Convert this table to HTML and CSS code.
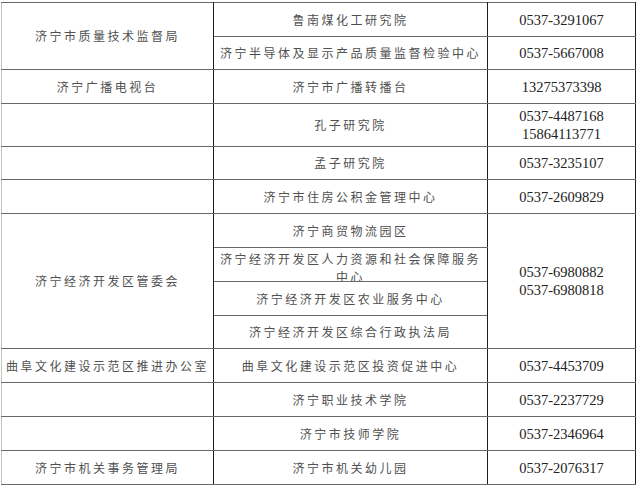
FILE: index.html
```html
<!DOCTYPE html>
<html lang="zh-CN">
<head>
<meta charset="utf-8">
<title>单位联系电话</title>
<link rel="stylesheet" href="styles.css">
</head>
<body>
<div class="sheet">
<table class="units">
<colgroup><col class="c1"><col class="c2"><col class="c3"></colgroup>
<tbody>
<tr class="h34"><td class="org" rowspan="2">济宁市质量技术监督局</td><td class="unit">鲁南煤化工研究院</td><td class="tel">0537-3291067</td></tr>
<tr class="h33"><td class="unit">济宁半导体及显示产品质量监督检验中心</td><td class="tel">0537-5667008</td></tr>
<tr class="h34"><td class="org">济宁广播电视台</td><td class="unit">济宁市广播转播台</td><td class="tel">13275373398</td></tr>
<tr class="h43"><td class="org"></td><td class="unit">孔子研究院</td><td class="tel">0537-4487168<br>15864113771</td></tr>
<tr class="h33"><td class="org"></td><td class="unit">孟子研究院</td><td class="tel">0537-3235107</td></tr>
<tr class="h34"><td class="org"></td><td class="unit">济宁市住房公积金管理中心</td><td class="tel">0537-2609829</td></tr>
<tr class="h34"><td class="org" rowspan="4">济宁经济开发区管委会</td><td class="unit">济宁商贸物流园区</td><td class="tel" rowspan="4">0537-6980882<br>0537-6980818</td></tr>
<tr class="h34"><td class="unit"><div class="clip">济宁经济开发区人力资源和社会保障服务中心</div></td></tr>
<tr class="h34"><td class="unit">济宁经济开发区农业服务中心</td></tr>
<tr class="h33"><td class="unit">济宁经济开发区综合行政执法局</td></tr>
<tr class="h34"><td class="org">曲阜文化建设示范区推进办公室</td><td class="unit">曲阜文化建设示范区投资促进中心</td><td class="tel">0537-4453709</td></tr>
<tr class="h34"><td class="org"></td><td class="unit">济宁职业技术学院</td><td class="tel">0537-2237729</td></tr>
<tr class="h34"><td class="org"></td><td class="unit">济宁市技师学院</td><td class="tel">0537-2346964</td></tr>
<tr class="h34"><td class="org">济宁市机关事务管理局</td><td class="unit">济宁市机关幼儿园</td><td class="tel">0537-2076317</td></tr>
</tbody>
</table>
</div>
</body>
</html>
```

FILE: styles.css
```css
html, body {
  margin: 0;
  padding: 0;
  background: #ffffff;
}

.sheet {
  padding: 2px 0 0 1px;
  width: 640px;
  height: 486px;
  box-sizing: border-box;
  overflow: hidden;
}

.units {
  border-collapse: collapse;
  table-layout: fixed;
  width: 634px;
  border-left: 1px solid #b9c9c1;
}

.c1 { width: 212px; }
.c2 { width: 274px; }
.c3 { width: 148px; }

.units td {
  border-top: 1px solid #6a6a6a;
  border-bottom: 1px solid #6a6a6a;
  border-left: 1px solid #1e1e1e;
  border-right: 1px solid #1e1e1e;
  padding: 0 3px;
  text-align: center;
  vertical-align: middle;
  line-height: 18px;
}

.units td.org:first-child {
  border-left: 1px solid #b9c9c1;
}

.h33 { height: 33px; }
.h34 { height: 34px; }
.h43 { height: 43px; }

.org, .unit {
  font-family: "Noto Sans CJK SC", "Noto Sans", sans-serif;
  font-size: 12px;
  letter-spacing: 2.5px;
  color: #505050;
  white-space: normal;
}

.tel {
  font-family: "Liberation Serif", "Times New Roman", serif;
  font-size: 14.5px;
  color: #222222;
}

.clip {
  height: 33px;
  overflow: hidden;
  padding-top: 2px;
  box-sizing: border-box;
}
```
